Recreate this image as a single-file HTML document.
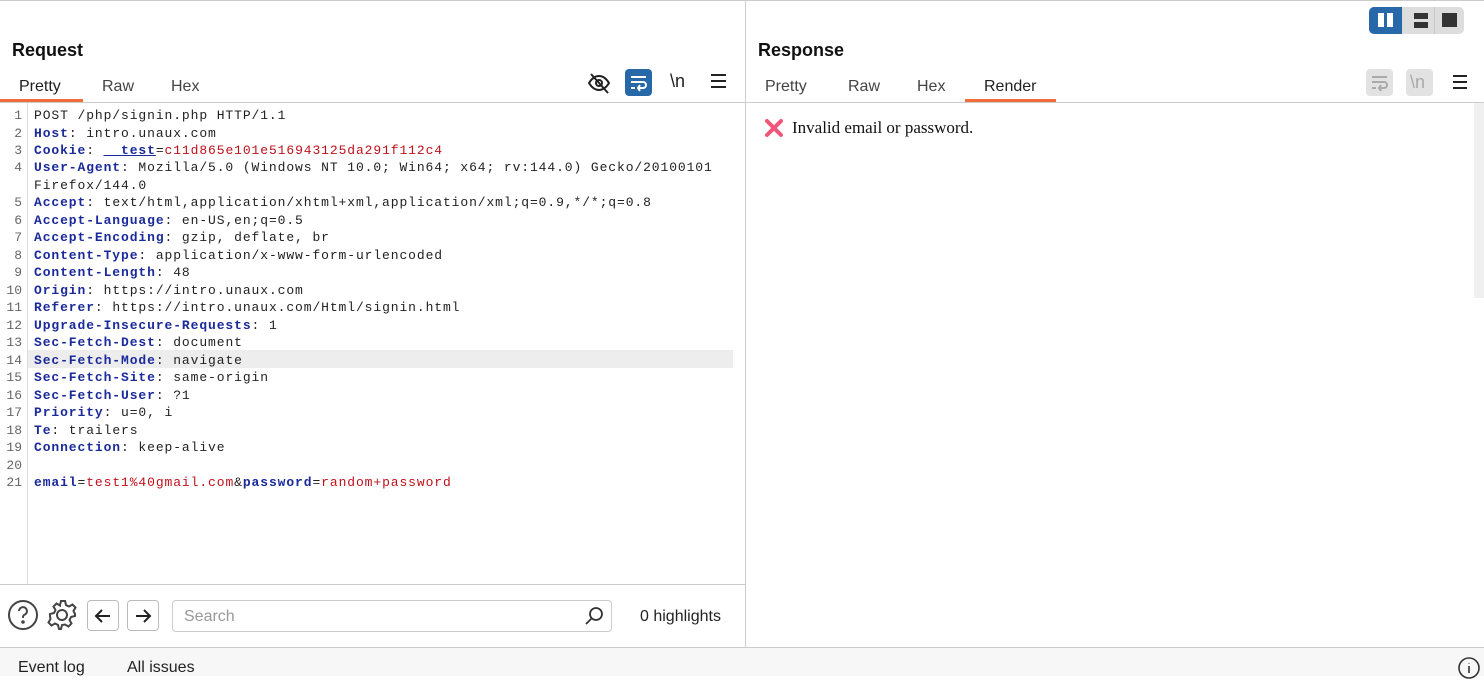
<!DOCTYPE html>
<html><head><meta charset="utf-8"><style>
*{margin:0;padding:0;box-sizing:border-box}
body{width:1484px;height:676px;background:#fff;font-family:"Liberation Sans",sans-serif;position:relative;overflow:hidden;color:#222}
.a{position:absolute}
.h{font-weight:bold;font-size:18px;color:#111}
.tab{font-size:16px;color:#444;position:absolute;top:78px}
.code{position:absolute;left:0;top:107px;font-family:"Liberation Mono",monospace;font-size:13px;letter-spacing:0.9px;line-height:17.48px;color:#222}
.ln{position:absolute;left:0;width:22px;text-align:right;color:#666;letter-spacing:0}
.tx{position:absolute;left:34px;white-space:pre}
.k{color:#1a2a9a;font-weight:bold;letter-spacing:0.9px}.r{color:#c0101a}
</style></head><body>
<div class="a" style="left:0;top:0;width:1484px;height:1px;background:#ccc"></div>
<div class="a" style="left:745px;top:0;width:1px;height:648px;background:#ccc"></div>

<div class="a h" style="left:12px;top:40px">Request</div>
<div class="tab" style="left:19px;color:#222">Pretty</div>
<div class="tab" style="left:102px">Raw</div>
<div class="tab" style="left:171px">Hex</div>
<div class="a" style="left:0;top:99px;width:83px;height:3px;background:#f26b3a"></div>
<div class="a" style="left:0;top:102px;width:745px;height:1px;background:#ccc"></div>
<svg class="a" style="left:587px;top:71px" width="24" height="24" viewBox="0 0 24 24" fill="none" stroke="#222" stroke-width="2"><path d="M2 12c3-5 6-7 10-7s7 2 10 7c-3 5-6 7-10 7s-7-2-10-7z"/><circle cx="12" cy="12" r="3"/><path d="M4 3l17 19"/></svg>
<div class="a" style="left:625px;top:69px;width:27px;height:27px;background:#2768a8;border-radius:4px"></div>
<svg class="a" style="left:628px;top:72px" width="21" height="21" viewBox="0 0 21 21" fill="none" stroke="#fff" stroke-width="2"><path d="M3 5h15M3 10h12a3 3 0 0 1 0 6h-4M3 16h4M12 13l-2 3 2 3"/></svg>
<div class="a" style="left:670px;top:71px;font-size:18px;color:#222">\n</div>
<div class="a" style="left:711px;top:74px;width:15px;height:2px;background:#222;box-shadow:0 6px #222,0 12px #222"></div>

<div class="a" style="left:27px;top:103px;width:1px;height:482px;background:#ddd"></div>
<div class="a" style="left:28px;top:350px;width:705px;height:18px;background:#ededed"></div>
<div class="code">
<div class="ln" style="top:0">1</div><div class="tx" style="top:0">POST /php/signin.php HTTP/1.1</div>
<div class="ln" style="top:17.5px">2</div><div class="tx" style="top:17.5px"><span class="k">Host</span>: intro.unaux.com</div>
<div class="ln" style="top:35px">3</div><div class="tx" style="top:35px"><span class="k">Cookie</span>: <span class="k" style="text-decoration:underline">__test</span>=<span class="r">c11d865e101e516943125da291f112c4</span></div>
<div class="ln" style="top:52.4px">4</div><div class="tx" style="top:52.4px"><span class="k">User-Agent</span>: Mozilla/5.0 (Windows NT 10.0; Win64; x64; rv:144.0) Gecko/20100101</div>
<div class="tx" style="top:69.9px">Firefox/144.0</div>
<div class="ln" style="top:87.4px">5</div><div class="tx" style="top:87.4px"><span class="k">Accept</span>: text/html,application/xhtml+xml,application/xml;q=0.9,*/*;q=0.8</div>
<div class="ln" style="top:104.9px">6</div><div class="tx" style="top:104.9px"><span class="k">Accept-Language</span>: en-US,en;q=0.5</div>
<div class="ln" style="top:122.4px">7</div><div class="tx" style="top:122.4px"><span class="k">Accept-Encoding</span>: gzip, deflate, br</div>
<div class="ln" style="top:139.8px">8</div><div class="tx" style="top:139.8px"><span class="k">Content-Type</span>: application/x-www-form-urlencoded</div>
<div class="ln" style="top:157.3px">9</div><div class="tx" style="top:157.3px"><span class="k">Content-Length</span>: 48</div>
<div class="ln" style="top:174.8px">10</div><div class="tx" style="top:174.8px"><span class="k">Origin</span>: https://intro.unaux.com</div>
<div class="ln" style="top:192.3px">11</div><div class="tx" style="top:192.3px"><span class="k">Referer</span>: https://intro.unaux.com/Html/signin.html</div>
<div class="ln" style="top:209.8px">12</div><div class="tx" style="top:209.8px"><span class="k">Upgrade-Insecure-Requests</span>: 1</div>
<div class="ln" style="top:227.2px">13</div><div class="tx" style="top:227.2px"><span class="k">Sec-Fetch-Dest</span>: document</div>
<div class="ln" style="top:244.7px">14</div><div class="tx" style="top:244.7px"><span class="k">Sec-Fetch-Mode</span>: navigate</div>
<div class="ln" style="top:262.2px">15</div><div class="tx" style="top:262.2px"><span class="k">Sec-Fetch-Site</span>: same-origin</div>
<div class="ln" style="top:279.7px">16</div><div class="tx" style="top:279.7px"><span class="k">Sec-Fetch-User</span>: ?1</div>
<div class="ln" style="top:297.2px">17</div><div class="tx" style="top:297.2px"><span class="k">Priority</span>: u=0, i</div>
<div class="ln" style="top:314.6px">18</div><div class="tx" style="top:314.6px"><span class="k">Te</span>: trailers</div>
<div class="ln" style="top:332.1px">19</div><div class="tx" style="top:332.1px"><span class="k">Connection</span>: keep-alive</div>
<div class="ln" style="top:349.6px">20</div>
<div class="ln" style="top:367.1px">21</div><div class="tx" style="top:367.1px"><span class="k">email</span>=<span class="r">test1%40gmail.com</span>&amp;<span class="k">password</span>=<span class="r">random+password</span></div>
</div>

<div class="a" style="left:0;top:584px;width:745px;height:1px;background:#ccc"></div>
<svg class="a" style="left:7px;top:599px" width="32" height="32" viewBox="0 0 32 32" fill="none" stroke="#444" stroke-width="2"><circle cx="16" cy="16" r="14"/><path d="M12 12a4 4 0 1 1 5 4c-1 .5-1 1.5-1 3"/><circle cx="16" cy="23" r=".8" fill="#444"/></svg>
<svg class="a" style="left:46px;top:599px" width="32" height="32" viewBox="0 0 32 32" fill="none" stroke="#444" stroke-width="2"><circle cx="16" cy="16" r="5"/><path d="M14 2h4l1 4 3 1.5 3.5-2 3 3-2 3.5L28 15v2l-4 1-1.5 3 2 3.5-3 3-3.5-2L15 26l-1 4h-2l-1-4-3-1.5-3.5 2-3-3 2-3.5L3 17v-2l4-1 1.5-3-2-3.5 3-3 3.5 2L13 6z" transform="translate(1 0)"/></svg>
<div class="a" style="left:87px;top:600px;width:32px;height:31px;border:1px solid #bbb;border-radius:4px"></div>
<div class="a" style="left:127px;top:600px;width:32px;height:31px;border:1px solid #bbb;border-radius:4px"></div>
<svg class="a" style="left:93px;top:606px" width="20" height="20" viewBox="0 0 20 20" fill="none" stroke="#222" stroke-width="2"><path d="M17 10H3M9 4l-6 6 6 6"/></svg>
<svg class="a" style="left:133px;top:606px" width="20" height="20" viewBox="0 0 20 20" fill="none" stroke="#222" stroke-width="2"><path d="M3 10h14M11 4l6 6-6 6"/></svg>
<div class="a" style="left:172px;top:600px;width:440px;height:32px;border:1px solid #ccc;border-radius:4px"></div>
<div class="a" style="left:184px;top:608px;font-size:16px;color:#999">Search</div>
<svg class="a" style="left:583px;top:605px" width="22" height="22" viewBox="0 0 22 22" fill="none" stroke="#333" stroke-width="1.8"><circle cx="13" cy="9" r="6"/><path d="M9 13l-6 6"/></svg>
<div class="a" style="left:640px;top:608px;font-size:16px;color:#222">0 highlights</div>

<div class="a" style="left:1369px;top:7px;width:95px;height:27px;background:#ddd;border-radius:5px"></div>
<div class="a" style="left:1369px;top:7px;width:33px;height:27px;background:#2768a8;border-radius:5px 0 0 5px"></div>
<div class="a" style="left:1378px;top:13px;width:6px;height:14px;background:#fff"></div>
<div class="a" style="left:1387px;top:13px;width:6px;height:14px;background:#fff"></div>
<div class="a" style="left:1434px;top:7px;width:1px;height:27px;background:#c8c8c8"></div>
<div class="a" style="left:1414px;top:13px;width:14px;height:6px;background:#333"></div>
<div class="a" style="left:1414px;top:22px;width:14px;height:6px;background:#333"></div>
<div class="a" style="left:1442px;top:13px;width:15px;height:14px;background:#333"></div>

<div class="a h" style="left:758px;top:40px">Response</div>
<div class="tab" style="left:765px">Pretty</div>
<div class="tab" style="left:848px">Raw</div>
<div class="tab" style="left:917px">Hex</div>
<div class="tab" style="left:984px;color:#222">Render</div>
<div class="a" style="left:965px;top:99px;width:91px;height:3px;background:#f26b3a"></div>
<div class="a" style="left:746px;top:102px;width:738px;height:1px;background:#ccc"></div>
<div class="a" style="left:1366px;top:69px;width:27px;height:27px;background:#e2e2e2;border-radius:4px"></div>
<svg class="a" style="left:1369px;top:72px" width="21" height="21" viewBox="0 0 21 21" fill="none" stroke="#aaa" stroke-width="2"><path d="M3 5h15M3 10h12a3 3 0 0 1 0 6h-4M3 16h4M12 13l-2 3 2 3"/></svg>
<div class="a" style="left:1406px;top:69px;width:27px;height:27px;background:#e2e2e2;border-radius:4px"></div>
<div class="a" style="left:1410px;top:72px;font-size:18px;color:#aaa">\n</div>
<div class="a" style="left:1453px;top:75px;width:14px;height:2px;background:#222;box-shadow:0 6px #222,0 12px #222"></div>
<div class="a" style="left:1474px;top:103px;width:10px;height:195px;background:#f0f0f0"></div>
<svg class="a" style="left:764px;top:118px" width="20" height="20" viewBox="0 0 20 20" stroke="#f2557a" stroke-width="4" stroke-linecap="round"><path d="M3 3l14 14M17 3L3 17"/></svg>
<div class="a" style="left:792px;top:118px;font-family:'Liberation Serif',serif;font-size:17px;color:#111">Invalid email or password.</div>

<div class="a" style="left:0;top:647px;width:1484px;height:29px;background:#f7f7f7;border-top:1px solid #ccc"></div>
<div class="a" style="left:18px;top:659px;font-size:16px;color:#222">Event log</div>
<div class="a" style="left:127px;top:659px;font-size:16px;color:#222">All issues</div>
<svg class="a" style="left:1457px;top:656px" width="24" height="24" viewBox="0 0 24 24" fill="none" stroke="#333" stroke-width="1.6"><circle cx="12" cy="12" r="10"/><path d="M12 10v7M12 7v.5"/></svg>
</body></html>
